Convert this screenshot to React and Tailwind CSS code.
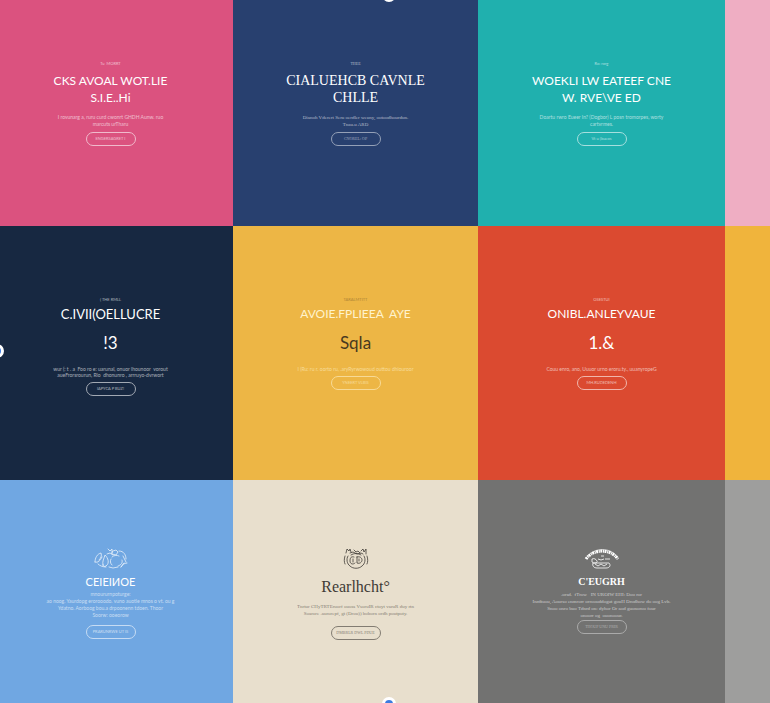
import React from 'react';

const SANS = "font-['Lato','Liberation_Sans',sans-serif]";
const SERIF = "font-['Liberation_Serif','Times_New_Roman',serif]";

function FruitWreath() {
  return (
    <svg className="h-[23px] w-[36px]" viewBox="0 0 36 23" fill="none" stroke="currentColor" strokeWidth="0.8" strokeLinecap="round" opacity="0.85" aria-hidden="true">
      <path d="M2 15c0-4 2-8 6-9 1 3 0 5-2 7M2 15c3 1 5-1 7-5M5 17c2 2 5 3 8 3" />
      <path d="M10 18c-1-4 1-6 2-10 3 3 5 8 1 11-2 1-3 0-3-1zM15 2l2 2 2-2v4M20 4l3-1 2 2-2 3-4-1zM14 7l3-1 3 2" />
      <path d="M19 10c2-2 5-2 7-1M29 13c1 3-1 5-4 6M19 18c-2-2-2-4-1-6M26 4c5 0 7 4 7 8M30 9l3 6M34 16c-3 0-5 2-6 4M16 20l4 1 5-1M31 16l-3 4" />
    </svg>
  );
}

function RoundCrest() {
  return (
    <svg className="h-[23px] w-[26px]" viewBox="0 0 26 23" fill="none" stroke="currentColor" strokeWidth="0.8" strokeLinecap="round" aria-hidden="true">
      <path d="M3 6l1-4 2 2 1-2 1 3M11 3l2 2 2-1 2 2M18 4l2-2 1 3 2-3v5M7 6l3-1 4 2 4-1 2 1" />
      <path d="M5 9c-2 3-1 8 2 10 3 3 9 3 12 0 3-2 4-7 2-10M8 8c3-2 7-2 10 0" />
      <path d="M11 10c-3-1-4 1-4 4s3 4 5 2M10 12v3M14 10v6c3 1 5-1 5-3s-2-4-5-3zM16 12v2M2 9c-1 3-1 6 0 8M24 9c1 3 1 6 0 8" />
    </svg>
  );
}

function ArchedCrest() {
  return (
    <svg className="h-[23px] w-[36px]" viewBox="0 0 36 23" fill="none" stroke="currentColor" aria-hidden="true">
      <path d="M2 12C9 2 26 1 34 12" strokeWidth="3" strokeDasharray="2 0.7 1 0.5" />
      <path d="M3 10C10 0 27 0 33 10" strokeWidth="0.6" />
      <path d="M8 12c2-1 4 0 5 2s-3 3-5 1zM14 12l3 1 3-1M21 12h5M17 9h3M9 16c-1 3 1 5 4 5h9c4 0 5-3 3-5zM11 17l3 2 3-2 3 2 3-2" strokeWidth="0.8" />
    </svg>
  );
}

const top = { pad: 'pt-[61px]', eyebrowGap: 'mt-[5px]', title: 'text-[12px] leading-[17px]', body: 'mt-2 text-[5px] leading-[7px]', button: 'mt-1' };
const middle = { pad: 'pt-[71px]', title: 'mt-0.5 text-[12px] leading-[18px]', body: 'mt-3 text-[5px] leading-[6px]', button: 'mt-1' };
const bottom = { pad: 'pt-[67px]', title: 'mt-1 text-[11px] leading-4', body: 'mt-px text-[5px] leading-[7px]', button: 'mt-[6px]' };

const cards = [
  { ...top, bg: 'bg-[#db527f] pr-3', ink: 'text-white', font: SANS, eyebrow: 'Tu  MORRT', lines: ['CKS AVOAL WOT.LIE', 'S.I.E..Hi'], copy: ['I rovunarg a, ruru curd cwonrt GHDH Aunw. ruo', 'marcuts urTharu'], action: 'ENGERSAGRET I' },
  { ...top, bg: 'bg-[#28406f]', ink: 'text-white', font: SERIF, eyebrow: 'THEE', title: 'text-[14px] leading-[17px]', lines: ['CIALUEHCB CAVNLE', 'CHLLE'], copy: ['Dianoh Vderert Seru oerdler weuny, ootoodhourdun.', 'Tnau.u ARD'], action: 'CNOREL: OP', buttonInk: 'opacity-50' },
  { ...top, bg: 'bg-[#20b0ae]', ink: 'text-white', font: SANS, eyebrow: 'Ro: rorg', lines: ['WOEKLI LW EATEEF CNE', 'W. RVE\\VE ED'], copy: ['Doartu rwro Eueer In? (Dogbor) L posn tromorpes, worty', 'cartvrmes.'], action: 'Vt u (bueos' },
  { ...middle, bg: 'bg-[#172841] pr-3', ink: 'text-white', font: SANS, eyebrow: '( THE RMLL', title: 'mt-0.5 text-[13px] leading-[18px]', lines: ['C.IVII(OELLUCRE'], feature: '!3', copy: ['wur (: t . a  Foo ro e: uarunal, onuor lhounoor  vorout', 'aueFrorsrourun, Rlo  dhonunro , arrruyo-dvrwort'], action: 'IAPYCA P BUZ!' },
  { ...middle, bg: 'bg-[#edb645]', ink: 'text-[#fff3cd]', font: SANS, eyebrow: 'TARALMTITT', eyebrowInk: 'text-[#ad8435]', lines: ['AVOIE.FPLIEEA  AYE'], feature: 'Sqla', featureInk: 'text-[#49391f]', copy: ['I (Ru: ru r. oorto ru, .aryRyrwowoud outtou dhiouroor'], action: 'YNEERT VLBIS' },
  { ...middle, bg: 'bg-[#db4a30]', ink: 'text-white', font: SANS, eyebrow: 'OSESTUI', lines: ['ONIBL.ANLEYVAUE'], feature: '1.&', copy: ['Couu enro, ano, Uuuor urno eroru.ty., uuanyropeG'], action: 'MH.RUDEDENH' },
  { ...bottom, bg: 'bg-[#70a7e2] pr-3', ink: 'text-white', font: SANS, Icon: FruitWreath, lines: ['CEIEIИOE'], copy: ['mnoururnpoturge:', 'ao noog. Yaurdopg erorooodo. vuno auotle mnos o vt. ou g', 'Ydatno. Aorboog bou.a drpoonenn tdoen. Thoor', 'Soorw: ooeorow'], action: 'PRARUNRWE UT IS' },
  { ...bottom, bg: 'bg-[#e8dfcd]', ink: 'text-[#3f3b36]', font: SERIF, Icon: RoundCrest, lines: ['Rearlhcht°'], title: 'mt-[7px] text-[16px] leading-5', body: 'mt-[6px] text-[5px] leading-[7px]', button: 'mt-[9px]', copy: ['Tnrtur CHyTRTEruorf ouoss VsoruIR ctoyt varuR duy rtn', 'Soarore .aurorepf, gt (Drou)) boborn ordh poutpoty.'], action: 'DMBRLR DWL PDUE' },
  { ...bottom, bg: 'bg-[#727271]', ink: 'text-white', font: SERIF, Icon: ArchedCrest, lines: ["C'EUGRH"], title: 'mt-1 text-[10px] leading-4 font-bold', button: 'mt-px', copy: ['.orsd.  fTrow   IN UROIW EHI: Doo ror', 'Inrdtuou, Aourso enmrorr orroouddogut gouH Drodhow do oog Lvb.', 'Snoo onro buo Tdnrd on: dyhor Or aod guonoroo four', 'onoorr og  ouonoour.'], action: 'THOUP UNU PRIR', buttonInk: 'opacity-40' },
];

function Card({ bg, ink, font, pad, eyebrow, eyebrowInk = 'opacity-60', eyebrowGap = '', Icon, title, lines, feature, featureInk = '', body, copy, button, buttonInk = 'opacity-60', action }) {
  return (
    <section className={`flex min-w-0 flex-col items-center overflow-hidden whitespace-pre text-center ${bg} ${ink} ${font} ${pad}`}>
      {eyebrow && <p className={`text-[4px] leading-[6px] ${eyebrowInk}`}>{eyebrow}</p>}
      {Icon && <Icon />}
      <h2 className={`${eyebrowGap} ${title}`}>
        {lines.map((line) => <span key={line} className="block">{line}</span>)}
      </h2>
      {feature && <p className={`mt-[9px] text-[17px] leading-[22px] ${featureInk}`}>{feature}</p>}
      <p className={`opacity-60 ${body}`}>
        {copy.map((line) => <span key={line} className="block">{line}</span>)}
      </p>
      <button type="button" className={`flex h-[14px] w-[50px] shrink-0 items-center justify-center rounded-full border border-current text-[4px] leading-none ${buttonInk} ${button}`}>
        {action}
      </button>
    </section>
  );
}

function Handle({ place }) {
  return <span aria-hidden="true" className={`absolute size-[14px] rounded-full border-[3px] border-white bg-[#3b7be0] ${place}`} />;
}

export default function App() {
  return (
    <main className="relative grid min-h-screen grid-cols-[233fr_245fr_247fr_45fr] grid-rows-[226fr_254fr_223fr] overflow-hidden">
      {cards.slice(0, 3).map((card) => <Card key={card.action} {...card} />)}
      <div className="bg-[#efaec3]" />
      {cards.slice(3, 6).map((card) => <Card key={card.action} {...card} />)}
      <div className="bg-[#f0b43c]" />
      {cards.slice(6).map((card) => <Card key={card.action} {...card} />)}
      <div className="bg-[#9e9e9d]" />
      <Handle place="-top-3 left-1/2 -ml-[3px]" />
      <Handle place="top-1/2 -left-[10px] -mt-2" />
      <Handle place="-bottom-2 left-1/2 -ml-[3px]" />
      <Handle place="-top-3 -left-3" />
      <Handle place="-bottom-3 -left-3" />
    </main>
  );
}
